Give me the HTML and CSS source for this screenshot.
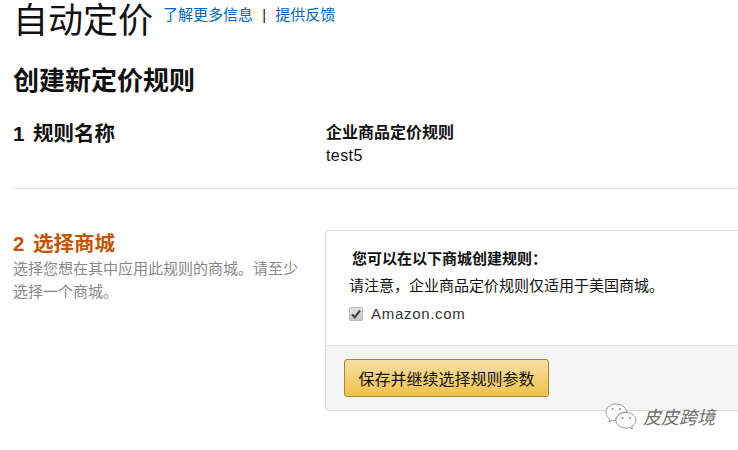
FILE: index.html
```html
<!DOCTYPE html>
<html lang="zh-CN">
<head>
    <meta charset="UTF-8">
    <title>自动定价</title>
    <link rel="stylesheet" href="styles.css">
</head>
<body>
    <div class="page">
        <!-- Page header -->
        <div class="page-head">
            <h1>自动定价</h1>
            <div class="head-links">
                <a href="#">了解更多信息</a>
                <span class="sep">|</span>
                <a href="#">提供反馈</a>
            </div>
        </div>

        <h2>创建新定价规则</h2>

        <!-- Step 1 -->
        <div class="step step-name">
            <h3>1 规则名称</h3>
            <div class="rule-info">
                <div class="rule-type">企业商品定价规则</div>
                <div class="rule-value">test5</div>
            </div>
        </div>

        <!-- Step 2 -->
        <div class="step step-market">
            <div>
                <h3 class="active">2 选择商城</h3>
                <p class="step-desc">选择您想在其中应用此规则的商城。请至少选择一个商城。</p>
            </div>
            <div class="card">
                <div class="card-body">
                    <div class="card-title">您可以在以下商城创建规则：</div>
                    <div class="card-note">请注意，企业商品定价规则仅适用于美国商城。</div>
                    <div class="market">
                        <span class="check">
                            <svg width="10" height="10" viewBox="0 0 10 10" fill="none" stroke="#444444" stroke-width="2.200">
                                <path d="M1 5.500l2.800 2.800L9 1.500"/>
                            </svg>
                        </span>
                        <span>Amazon.com</span>
                    </div>
                </div>
                <div class="card-foot">
                    <button class="save-button">保存并继续选择规则参数</button>
                </div>
            </div>
        </div>
    </div>

    <!-- Watermark over the page -->
    <div class="watermark">
        <svg width="32" height="26" viewBox="0 0 32 26" fill="#ffffff" stroke="#9a9a9a" stroke-width="1">
            <path d="M11 1C5.500 1 1 4.800 1 9.500c0 2.700 1.400 4.800 3.600 6.400L4 19l3.500-1.800c1 .3 2 .5 3 .5C10.500 13 15.500 8.500 22 9 21 4.500 16.500 1 11 1z"/>
            <path d="M21 9.500c-5.500 0-10 3.500-10 7.800s4.500 7.800 10 7.800c1.200 0 2.300-.2 3.300-.5l3.200 1.400-.8-3c2.700-1.400 4.300-3.500 4.300-5.700 0-4.300-4.500-7.800-10-7.800z"/>
            <circle cx="7.500" cy="6" r="1" fill="#888888" stroke="none"/>
            <circle cx="15" cy="6" r="1" fill="#888888" stroke="none"/>
            <circle cx="17.500" cy="15" r="1" fill="#888888" stroke="none"/>
            <circle cx="25" cy="15" r="1" fill="#888888" stroke="none"/>
        </svg>
        <span>皮皮跨境</span>
    </div>
</body>
</html>
```

FILE: styles.css
```css
html, body {
    margin: 0;
    height: 100%;
    overflow: hidden;
    background-color: #ffffff;
}

body {
    font-family: "Liberation Sans", "Noto Sans CJK SC", sans-serif;
    color: #111111;
}

.page {
    padding-left: 13px;
}

.page-head {
    display: flex;
    align-items: flex-start;
    height: 42px;
}

h1 {
    margin: 0;
    font-size: 35px;
    line-height: 42px;
    font-weight: normal;
}

.head-links {
    margin-left: 10px;
    font-size: 15px;
    line-height: 20px;
    margin-top: 5px;
}

.head-links a {
    color: #0066c0;
    text-decoration: none;
}

.sep {
    margin: 0 5px;
}

h2 {
    margin: 23px 0 0 0;
    font-size: 26px;
    line-height: 32px;
}

h3 {
    margin: 0;
    font-size: 20.500px;
    line-height: 26px;
    word-spacing: 3px;
}

h3.active {
    color: #c45500;
}

.step {
    display: grid;
    grid-template-columns: 313px 1fr;
}

.step-name {
    padding-top: 24px;
    height: 67px;
    border-bottom: 1px solid #e7e7e7;
}

.rule-info {
    font-size: 16px;
    line-height: 23px;
}

.rule-type {
    font-weight: bold;
}

.rule-value {
    letter-spacing: 0.400px;
}

.step-market {
    padding-top: 41px;
}

.step-market h3 {
    padding-top: 1px;
    height: 26px;
}

.step-desc {
    margin: 0;
    width: 290px;
    font-size: 15px;
    line-height: 23px;
    color: #888888;
}

.card {
    margin-left: -1px;
    border: 1px solid #dddddd;
    border-right: none;
    border-radius: 4px 0 0 4px;
    height: 179px;
    display: flex;
    flex-direction: column;
}

.card-body {
    height: 114px;
    padding: 18px 0 0 23px;
    box-sizing: border-box;
}

.card-title {
    padding-left: 3px;
    font-size: 15px;
    font-weight: bold;
    line-height: 20px;
}

.card-note {
    margin-top: 7px;
    font-size: 15px;
    line-height: 20px;
}

.market {
    display: flex;
    align-items: center;
    gap: 8px;
    margin-top: 8px;
    font-size: 15px;
    line-height: 20px;
    letter-spacing: 0.700px;
    color: #333333;
}

.check {
    display: flex;
    align-items: center;
    justify-content: center;
    width: 12px;
    height: 12px;
    background: linear-gradient(#e2e2e2, #c9c9c9);
    border: 1px solid #bbbbbb;
    border-radius: 2px;
}

.card-foot {
    flex: 1;
    padding: 13px 18px;
    background-color: #f5f5f5;
    border-top: 1px solid #dddddd;
    border-radius: 0 0 0 4px;
}

.save-button {
    display: block;
    width: 205px;
    height: 38px;
    padding: 0;
    font-family: inherit;
    font-size: 16px;
    color: #111111;
    background: linear-gradient(#f7dfa5, #f0c14b);
    border: 1px solid #a88734;
    border-radius: 3px;
}

.watermark {
    position: absolute;
    left: 605px;
    top: 403px;
    display: flex;
    align-items: center;
    gap: 6px;
    font-size: 18px;
    font-style: italic;
    color: #707070;
    text-shadow: 1px 1px 1px #ffffff;
}
```
